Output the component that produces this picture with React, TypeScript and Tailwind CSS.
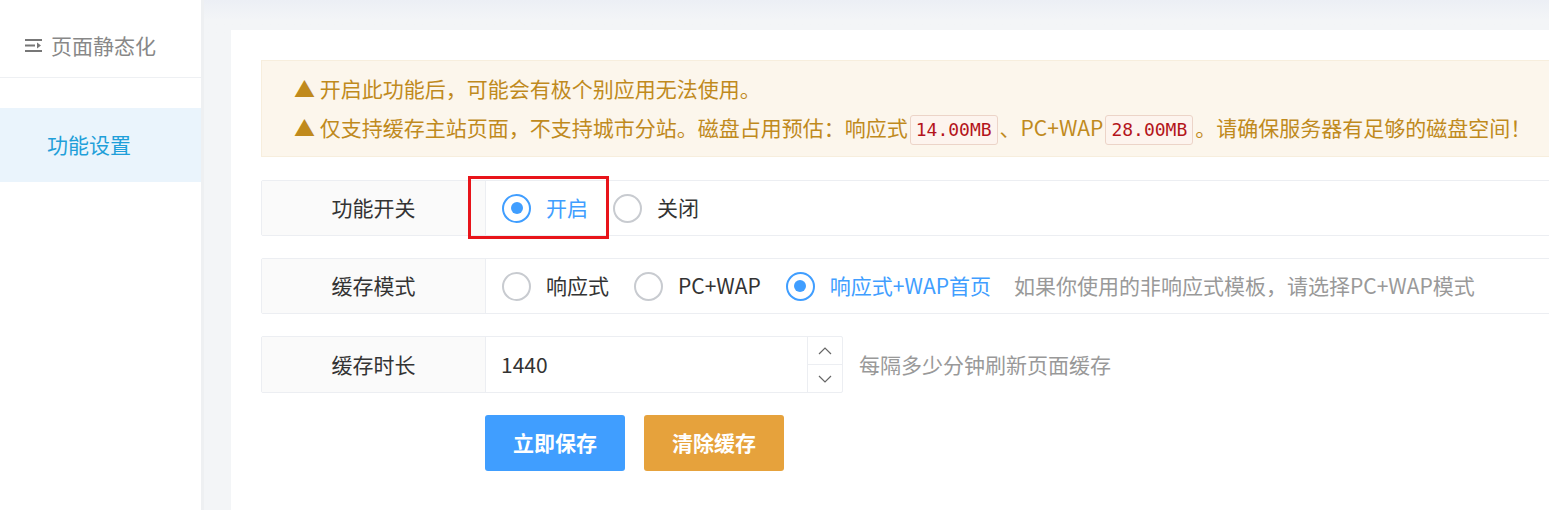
import { useState } from "react";

const FONT = '"Noto Sans CJK SC", "Noto Sans", sans-serif';

function MenuIcon() {
  return (
    <svg width="18" height="15" viewBox="0 0 18 15" className="shrink-0">
      <rect x="0" y="1" width="17" height="2" fill="#777" />
      <rect x="0" y="6.5" width="10" height="2" fill="#777" />
      <path d="M12 4.5 L16 7.5 L12 10.5 Z" fill="#777" />
      <rect x="0" y="12" width="17" height="2" fill="#777" />
    </svg>
  );
}

function Radio({ checked, label, onClick }: { checked: boolean; label: string; onClick: () => void }) {
  return (
    <button type="button" onClick={onClick} className="flex items-center gap-[15px]">
      <span
        className={
          checked
            ? "w-[29px] h-[29px] rounded-full border-2 border-[#409eff] flex items-center justify-center"
            : "w-[29px] h-[29px] rounded-full border-2 border-[#c8cbd0]"
        }
      >
        {checked && <span className="w-[12px] h-[12px] rounded-full bg-[#409eff]" />}
      </span>
      <span className={checked ? "text-[#409eff]" : "text-[#333]"}>{label}</span>
    </button>
  );
}

function Code({ children }: { children: string }) {
  return (
    <span
      className="inline-block mx-[2px] px-[5px] leading-[28px] text-[18px] text-[#b4141b] bg-[#fdf4ee] border border-[#ecd4c8] rounded-[3px] align-middle"
      style={{ fontFamily: '"DejaVu Sans Mono", monospace' }}
    >
      {children}
    </span>
  );
}

function Row({ label, children }: { label: string; children: React.ReactNode }) {
  return (
    <div className="flex h-[56px] border border-[#eceef2] rounded-[2px]">
      <div className="w-[224px] shrink-0 bg-[#fafafa] border-r border-[#eceef2] flex items-center justify-center text-[#333]">
        {label}
      </div>
      <div className="flex-1 flex items-center pl-[16px] bg-white">{children}</div>
    </div>
  );
}

export default function App() {
  const [enabled, setEnabled] = useState(true);
  const [mode, setMode] = useState(2);
  const [minutes, setMinutes] = useState(1440);

  return (
    <div className="flex h-[510px] overflow-hidden bg-[#f3f5f7] text-[21px]" style={{ fontFamily: FONT }}>
      {/* side menu */}
      <aside className="w-[204px] shrink-0 bg-white border-r-[3px] border-[#eef0f2]">
        <div className="h-[78px] flex items-center gap-[8px] pl-[25px] pt-[14px] border-b border-[#eef0f3] text-[#888]">
          <MenuIcon />
          <span>页面静态化</span>
        </div>
        <div className="mt-[30px] h-[74px] bg-[#eaf4fc] flex items-center pl-[47px] text-[#1f9fd9]">
          功能设置
        </div>
      </aside>

      <main className="flex-1 min-w-0 pt-[30px] pl-[27px] bg-gradient-to-b from-[#eceff5] via-[#f3f5f7] to-[#f3f5f7] bg-[length:100%_40px] bg-no-repeat">
        <div className="bg-white h-full -mr-[80px] pt-[30px] pl-[30px] pr-[30px]">
          {/* notice */}
          <div className="bg-[#fcf6ec] border border-[#f7eedd] pl-[32px] pt-[8px] pb-[9px] leading-[39px] text-[#c08a1d]">
            <div>▲ 开启此功能后，可能会有极个别应用无法使用。</div>
            <div>
              ▲ 仅支持缓存主站页面，不支持城市分站。磁盘占用预估：响应式<Code>14.00MB</Code>、PC+WAP<Code>28.00MB</Code>。请确保服务器有足够的磁盘空间！
            </div>
          </div>

          <div className="mt-[23px] flex flex-col gap-[22px]">
            <Row label="功能开关">
              <div className="relative flex items-center gap-[25px]">
                <Radio checked={enabled} label="开启" onClick={() => setEnabled(true)} />
                <Radio checked={!enabled} label="关闭" onClick={() => setEnabled(false)} />
                <span className="absolute -left-[34px] -top-[16px] w-[141px] h-[63px] border-[3px] border-[#e8141a] pointer-events-none" />
              </div>
            </Row>

            <Row label="缓存模式">
              <div className="flex items-center gap-[25px]">
                <Radio checked={mode === 0} label="响应式" onClick={() => setMode(0)} />
                <Radio checked={mode === 1} label="PC+WAP" onClick={() => setMode(1)} />
                <Radio checked={mode === 2} label="响应式+WAP首页" onClick={() => setMode(2)} />
              </div>
              <span className="ml-[23px] text-[#999]">如果你使用的非响应式模板，请选择PC+WAP模式</span>
            </Row>

            <div className="flex items-center">
              <div className="flex h-[57px] border border-[#eceef2] rounded-[2px]">
                <div className="w-[224px] shrink-0 bg-[#fafafa] border-r border-[#eceef2] flex items-center justify-center text-[#333]">
                  缓存时长
                </div>
                <div className="w-[321px] flex items-center pl-[15px] text-[#333]">{minutes}</div>
                <div className="w-[35px] flex flex-col border-l border-[#eceef2]">
                  <button
                    type="button"
                    onClick={() => setMinutes(minutes + 1)}
                    className="flex-1 flex items-center justify-center border-b border-[#eceef2]"
                  >
                    <svg width="14" height="8" viewBox="0 0 14 8">
                      <path d="M1 7 L7 1 L13 7" fill="none" stroke="#666" strokeWidth="1.2" />
                    </svg>
                  </button>
                  <button
                    type="button"
                    onClick={() => setMinutes(Math.max(0, minutes - 1))}
                    className="flex-1 flex items-center justify-center"
                  >
                    <svg width="14" height="8" viewBox="0 0 14 8">
                      <path d="M1 1 L7 7 L13 1" fill="none" stroke="#666" strokeWidth="1.2" />
                    </svg>
                  </button>
                </div>
              </div>
              <span className="ml-[16px] text-[#999]">每隔多少分钟刷新页面缓存</span>
            </div>

            <div className="flex gap-[19px] pl-[224px]">
              <button type="button" className="w-[140px] h-[56px] rounded-[3px] bg-[#409eff] text-white font-bold">
                立即保存
              </button>
              <button type="button" className="w-[140px] h-[56px] rounded-[3px] bg-[#e6a23c] text-white font-bold">
                清除缓存
              </button>
            </div>
          </div>
        </div>
      </main>
    </div>
  );
}
